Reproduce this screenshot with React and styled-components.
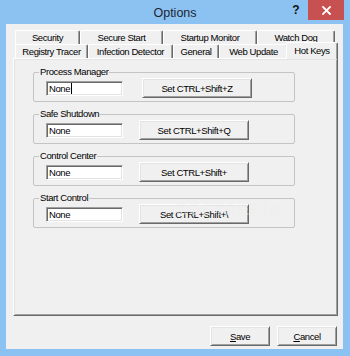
import React from 'react';
import styled, { createGlobalStyle } from 'styled-components';

const uiFont = '"Liberation Sans", Arial, sans-serif';

const GlobalStyle = createGlobalStyle`
    html, body {
        margin: 0;
        padding: 0;
        background: #8cc2f2;
    }
    body {
        font-family: ${uiFont};
        font-size: 9.5px;
        letter-spacing: -0.4px;
        color: #000;
    }
    * {
        box-sizing: border-box;
    }
`;

const Window = styled.div`
    width: 350px;
    height: 356px;
    background: #8cc2f2;
    display: flex;
    flex-direction: column;
    overflow: hidden;
`;

const TitleBar = styled.div`
    flex: none;
    height: 24px;
    display: grid;
    grid-template-columns: 1fr auto 1fr;
    align-items: start;
`;

const Title = styled.div`
    grid-column: 2;
    font-size: 12.5px;
    letter-spacing: 0;
    line-height: 26px;
    color: #1b2633;
`;

const Controls = styled.div`
    grid-column: 3;
    justify-self: end;
    display: flex;
    margin-right: 6px;
`;

const HelpButton = styled.div`
    width: 24px;
    height: 20px;
    font-size: 12px;
    font-weight: bold;
    letter-spacing: 0;
    line-height: 20px;
    text-align: center;
    color: #111;
`;

const CloseButton = styled.div`
    width: 36px;
    height: 20px;
    background: #c75050;
    display: flex;
    align-items: center;
    justify-content: center;
`;

const Client = styled.div`
    width: 337px;
    height: 325px;
    margin-left: 6px;
    background: #f0f0f0;
    padding: 6px 0 0 7px;
    display: flex;
    flex-direction: column;
`;

const TabStrip = styled.div`
    position: relative;
    z-index: 1;
    padding-left: 2px;
    display: flex;
    flex-direction: column;
`;

const TabRow = styled.div`
    display: flex;
    height: 14px;
`;

const Tab = styled.div`
    flex: none;
    position: relative;
    z-index: ${({ $active }) => ($active ? 2 : 1)};
    width: ${({ $w }) => $w}px;
    height: ${({ $active }) => ($active ? 17 : 14)}px;
    margin: ${({ $active }) => ($active ? '-2px 0 0 -2px' : '0')};
    padding-top: ${({ $active }) => ($active ? 1 : 0)}px;
    background: #f0f0f0;
    border-top: 1px solid #fff;
    border-left: 1px solid #fff;
    border-right: 1px solid #696969;
    border-radius: 2px 2px 0 0;
    box-shadow: inset -1px 0 #a0a0a0;
    text-align: center;
    line-height: 13px;
    white-space: nowrap;
`;

const Panel = styled.div`
    position: relative;
    width: 325px;
    height: 258px;
    background: #f0f0f0;
    border: 1px solid;
    border-color: #fff #696969 #696969 #fff;
    box-shadow: inset 1px 1px #e3e3e3, inset -1px -1px #a0a0a0;
    padding: 7px 0 0 19px;
    display: flex;
    flex-direction: column;
    gap: 6px;
`;

const Group = styled.fieldset`
    margin: 0;
    width: 262px;
    border: 1px solid #c4c4c4;
    border-radius: 2px;
    padding: 0 6px 3px 5px;
`;

const Legend = styled.legend`
    padding: 0 1px;
    line-height: 12px;
`;

const Row = styled.div`
    display: flex;
    align-items: center;
    height: 20px;
    margin-left: 7px;
`;

const Field = styled.div`
    width: 77px;
    height: 15px;
    background: #fff;
    border: 1px solid;
    border-color: #a0a0a0 #fff #fff #a0a0a0;
    box-shadow: inset 1px 1px #696969, inset -1px -1px #e3e3e3;
    padding-left: 2px;
    display: flex;
    align-items: center;
    line-height: 13px;
`;

const Caret = styled.span`
    display: inline-block;
    width: 1px;
    height: 11px;
    margin-left: 1px;
    background: #000;
`;

const Button = styled.div`
    flex: none;
    width: ${({ $w }) => $w}px;
    height: 20px;
    margin-left: ${({ $gap }) => $gap || 0}px;
    background: #f0f0f0;
    border: 1px solid;
    border-color: #fff #696969 #696969 #fff;
    box-shadow: inset 1px 1px #e3e3e3, inset -1px -1px #a0a0a0;
    display: flex;
    align-items: center;
    justify-content: center;
    white-space: nowrap;

    u {
        text-decoration: underline;
        text-underline-offset: 1px;
    }
`;

const Footer = styled.div`
    width: 325px;
    margin-top: 10px;
    padding-right: 1px;
    display: flex;
    justify-content: flex-end;
    gap: 7px;
`;

const Watermark = styled.div`
    position: absolute;
    left: 162px;
    top: 141px;
    z-index: 3;
    font-size: 17px;
    font-weight: bold;
    letter-spacing: 1px;
    color: rgba(255, 255, 255, 0.45);
    text-shadow: 0 0 1px rgba(0, 0, 0, 0.05);
    pointer-events: none;
`;

const backTabs = [
    { label: 'Security', w: 65 },
    { label: 'Secure Start', w: 83 },
    { label: 'Startup Monitor', w: 94 },
    { label: 'Watch Dog', w: 78 },
];

const frontTabs = [
    { label: 'Registry Tracer', w: 73 },
    { label: 'Infection Detector', w: 85 },
    { label: 'General', w: 46 },
    { label: 'Web Update', w: 69 },
    { label: 'Hot Keys', w: 52, active: true },
];

const hotKeys = [
    { title: 'Process Manager', key: 'Set CTRL+Shift+Z', gap: 19, caret: true },
    { title: 'Safe Shutdown', key: 'Set CTRL+Shift+Q', gap: 16 },
    { title: 'Control Center', key: 'Set CTRL+Shift+', gap: 16 },
    { title: 'Start Control', key: 'Set CTRL+Shift+\\', gap: 16 },
];

const CloseIcon = () => (
    <svg width="9" height="9" viewBox="0 0 9 9">
        <path d="M1 1 L8 8 M8 1 L1 8" stroke="#fff" strokeWidth="1.8" strokeLinecap="square" />
    </svg>
);

export default function App() {
    return (
        <>
            <GlobalStyle />
            <Window>
                <TitleBar>
                    <Title>Options</Title>
                    <Controls>
                        <HelpButton>?</HelpButton>
                        <CloseButton>
                            <CloseIcon />
                        </CloseButton>
                    </Controls>
                </TitleBar>
                <Client>
                    <TabStrip>
                        <TabRow>
                            {backTabs.map((t) => (
                                <Tab key={t.label} $w={t.w}>{t.label}</Tab>
                            ))}
                        </TabRow>
                        <TabRow>
                            {frontTabs.map((t) => (
                                <Tab key={t.label} $w={t.w} $active={t.active}>{t.label}</Tab>
                            ))}
                        </TabRow>
                    </TabStrip>
                    <Panel>
                        {hotKeys.map((h) => (
                            <Group key={h.title}>
                                <Legend>{h.title}</Legend>
                                <Row>
                                    <Field>
                                        None
                                        {h.caret && <Caret />}
                                    </Field>
                                    <Button $w={110} $gap={h.gap}>{h.key}</Button>
                                </Row>
                            </Group>
                        ))}
                        <Watermark>SOFTPEDIA</Watermark>
                    </Panel>
                    <Footer>
                        <Button $w={60}><u>S</u>ave</Button>
                        <Button $w={60}><u>C</u>ancel</Button>
                    </Footer>
                </Client>
            </Window>
        </>
    );
}
